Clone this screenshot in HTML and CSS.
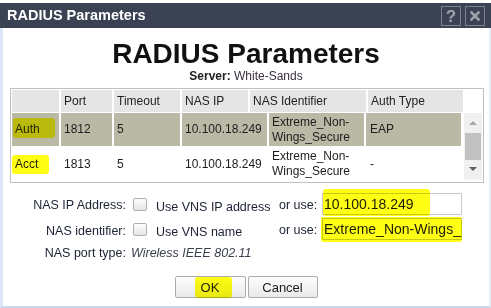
FILE: index.html
```html
<!DOCTYPE html>
<html>
<head>
<meta charset="utf-8">
<link rel="stylesheet" href="styles.css">
</head>
<body>
<div class="dialog">
  <div class="titlebar">
    <span class="title">RADIUS Parameters</span>
    <div class="tb-btns">
      <span class="tb-btn help">?</span>
      <span class="tb-btn close"><svg width="10" height="10" viewBox="0 0 10 10"><path d="M1.5 1.5 L8.5 8.5 M8.5 1.5 L1.5 8.5" stroke="#9ea3ab" stroke-width="2.6" stroke-linecap="square"/></svg></span>
    </div>
  </div>
  <div class="content">
    <h1 class="heading">RADIUS Parameters</h1>
    <div class="server"><b>Server:</b> <span class="server-name">White-Sands</span></div>

    <div class="tablebox">
      <div class="thead">
        <div class="th"></div>
        <div class="th">Port</div>
        <div class="th">Timeout</div>
        <div class="th">NAS IP</div>
        <div class="th">NAS Identifier</div>
        <div class="th">Auth Type</div>
        <div class="th blank"></div>
      </div>
      <div class="tbody-wrap">
        <div class="tbody">
          <div class="row sel">
            <div class="td">Auth</div>
            <div class="td">1812</div>
            <div class="td">5</div>
            <div class="td">10.100.18.249</div>
            <div class="td">Extreme_Non-<br>Wings_Secure</div>
            <div class="td">EAP</div>
          </div>
          <div class="row">
            <div class="td">Acct</div>
            <div class="td">1813</div>
            <div class="td">5</div>
            <div class="td">10.100.18.249</div>
            <div class="td">Extreme_Non-<br>Wings_Secure</div>
            <div class="td">-</div>
          </div>
        </div>
        <div class="scrollbar">
          <div class="arrow up"></div>
          <div class="thumb"></div>
          <div class="arrow down"></div>
        </div>
      </div>
    </div>

    <div class="form">
      <div class="lbl">NAS IP Address:</div>
      <div class="chkcell"><input type="checkbox" class="chk"></div>
      <div class="chklbl">Use VNS IP address</div>
      <div class="oruse">or use:</div>
      <div class="inpcell"><input class="txt" type="text" value="10.100.18.249"></div>

      <div class="lbl l2">NAS identifier:</div>
      <div class="chkcell"><input type="checkbox" class="chk"></div>
      <div class="chklbl">Use VNS name</div>
      <div class="oruse">or use:</div>
      <div class="inpcell"><input class="txt" type="text" value="Extreme_Non-Wings_Secure"></div>

      <div class="lbl l3">NAS port type:</div>
      <div class="portval">Wireless IEEE 802.11</div>
    </div>

    <div class="buttons">
      <button class="btn ok">OK</button>
      <button class="btn cancel">Cancel</button>
    </div>
  </div>

  <span class="hl hl-auth"></span>
  <span class="hl hl-acct"></span>
  <span class="hl hl-ip"></span>
  <span class="hl hl-id"></span>
  <span class="hl hl-ok"></span>
</div>
</body>
</html>
```

FILE: styles.css
```css
* { box-sizing: border-box; }
html, body { margin: 0; padding: 0; background: #fff; }
body {
  width: 491px;
  height: 308px;
  overflow: hidden;
  font-family: "Liberation Sans", Arial, sans-serif;
  color: #1d1d1d;
}
.dialog {
  position: relative;
  width: 491px;
  height: 308px;
  padding-top: 3px;
}
.titlebar {
  height: 25px;
  background: #3a4253;
  display: flex;
  align-items: center;
  justify-content: space-between;
  padding: 0 6px 0 7px;
}
.title {
  color: #fff;
  font-weight: bold;
  font-size: 14.5px;
  margin-top: -2px;
}
.tb-btns {
  display: flex;
  gap: 4px;
  margin-top: 1px;
}
.tb-btn {
  width: 20px;
  height: 20px;
  border: 1px solid #7d838e;
  display: flex;
  align-items: center;
  justify-content: center;
  color: #9ea3ab;
  font-weight: bold;
  font-size: 17px;
  line-height: 1;
}
.content {
  height: 280px;
  border-left: 3px solid #dbe7f4;
  border-right: 2px solid #e6edf5;
  border-bottom: 2px solid #c9d8ea;
  padding-top: 10px;
}
.heading {
  margin: 0;
  text-align: center;
  font-size: 28px;
  line-height: 32px;
  font-weight: bold;
  color: #111;
}
.server {
  text-align: center;
  font-size: 12px;
  line-height: 13px;
  color: #222;
}
.server-name { color: #3a3040; }

.tablebox {
  margin: 5px 0 0 7px;
  width: 474px;
  border: 1px solid #c0c0c0;
  padding: 1px 1px 2px 1px;
  font-size: 12px;
}
.thead {
  display: grid;
  grid-template-columns: 47px 51px 66px 66px 116px 95px 1fr;
  column-gap: 2px;
  height: 22px;
}
.th {
  background: #e5e5e5;
  padding-left: 3px;
  display: flex;
  align-items: center;
  color: #222;
}
.th.blank { background: #fff; }
.tbody-wrap {
  display: flex;
  margin-top: 1px;
  height: 67px;
}
.tbody {
  display: flex;
  flex-direction: column;
  gap: 2px;
  width: 451px;
}
.row {
  display: grid;
  grid-template-columns: 47px 51px 66px 85px 95px 95px;
  column-gap: 2px;
  height: 32px;
}
.row.sel { height: 33px; }
.td {
  display: flex;
  align-items: center;
  padding-left: 3px;
  line-height: 15px;
  background: #fff;
  color: #1d1d1d;
}
.row.sel .td { background: #bab9a5; }
.row .td:last-child { padding-left: 4px; }
.scrollbar {
  margin-left: 1px;
  width: 18px;
  background: #f0f0f0;
  display: flex;
  flex-direction: column;
  align-items: center;
  padding-top: 8px;
}
.arrow {
  width: 0;
  height: 0;
  border-left: 4px solid transparent;
  border-right: 4px solid transparent;
}
.arrow.up { border-bottom: 4px solid #a6a6a6; }
.arrow.down { border-top: 4px solid #5e5e5e; margin-top: 7px; }
.thumb {
  width: 16px;
  height: 27px;
  background: #c1c1c1;
  margin-top: 8px;
}

.form {
  margin: 10px 0 0 17px;
  display: grid;
  grid-template-columns: 106px 30px 123px 43px 140px;
  grid-template-rows: 22px 22px 19px;
  row-gap: 3px;
  font-size: 12.5px;
  color: #1c2233;
}
.lbl {
  text-align: right;
  display: flex;
  align-items: center;
  justify-content: flex-end;
  padding-top: 1px;
}
.lbl.l2 { padding-top: 4px; }
.lbl.l3 { padding-top: 0; }
.chkcell {
  display: flex;
  align-items: center;
  padding-left: 7px;
}
.chk {
  appearance: none;
  -webkit-appearance: none;
  margin: 0;
  width: 14px;
  height: 13px;
  border: 1px solid #b0b0b0;
  border-radius: 2px;
  background: linear-gradient(#fdfdfd, #e4e4e4);
}
.chklbl {
  display: flex;
  align-items: center;
  padding-top: 6px;
  font-size: 12.5px;
}
.oruse {
  display: flex;
  align-items: center;
  padding-top: 2px;
  font-size: 12.5px;
}
.inpcell { display: flex; }
.txt {
  width: 140px;
  height: 22px;
  margin: 0;
  border: 1px solid #c9c9c9;
  padding: 0 0 0 1px;
  font-family: "Liberation Sans", Arial, sans-serif;
  font-size: 14px;
  color: #1d1d1d;
  background: #fff;
  outline: none;
}
.portval {
  grid-column: 2 / 6;
  display: flex;
  align-items: center;
  padding-left: 5px;
  font-style: italic;
  color: #3a3f4d;
}

.buttons {
  margin-top: 14px;
  display: flex;
  justify-content: center;
  gap: 2px;
}
.btn {
  height: 22px;
  margin: 0;
  padding: 0;
  border: 1px solid #acacac;
  border-radius: 2px;
  background: linear-gradient(#fdfdfd, #e9e9e9);
  font-family: "Liberation Sans", Arial, sans-serif;
  font-size: 13px;
  color: #222;
}
.btn.ok { width: 71px; }
.btn.cancel { width: 70px; }

.hl {
  position: absolute;
  background: #ffff14;
  mix-blend-mode: multiply;
  border-radius: 3px;
}
.hl-auth { left: 13px; top: 118px; width: 42px; height: 20px; }
.hl-acct { left: 12px; top: 155px; width: 37px; height: 19px; }
.hl-ip { left: 323px; top: 189px; width: 107px; height: 27px; }
.hl-id { left: 321px; top: 217px; width: 141px; height: 25px; }
.hl-ok { left: 195px; top: 277px; width: 37px; height: 21px; }
```
